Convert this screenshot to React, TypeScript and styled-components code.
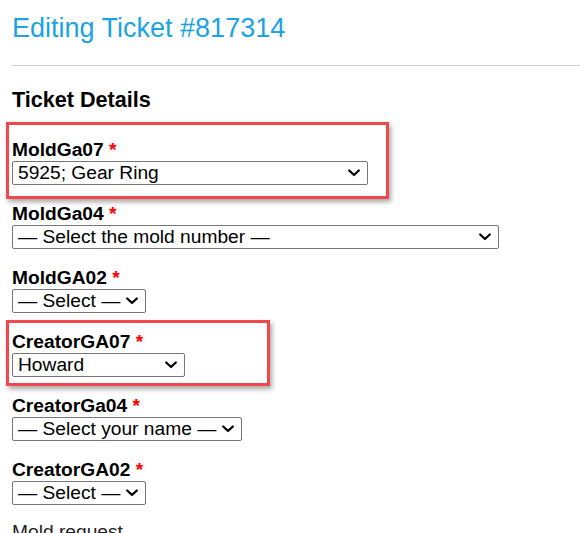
import React from "react";
import styled, { createGlobalStyle } from "styled-components";

const GlobalStyle = createGlobalStyle`
  html, body {
    margin: 0;
    padding: 0;
    background: #fff;
    overflow: hidden;
  }
  body {
    font-family: "Liberation Sans", Arial, sans-serif;
    color: #000;
  }
`

const chevron =
  "url(\"data:image/svg+xml;utf8,<svg xmlns='http://www.w3.org/2000/svg' width='12' height='8' viewBox='0 0 12 8'><path d='M1.2 1.5 L6 6 L10.8 1.5' fill='none' stroke='black' stroke-width='2.2' stroke-linecap='round' stroke-linejoin='round'/></svg>\")"

const Page = styled.div`
  padding: 12px 0 0 12px;
`
const Title = styled.h1`
  margin: 0;
  font-size: 27px;
  line-height: 32px;
  font-weight: normal;
  color: #1ba3e6;
`
const Rule = styled.hr`
  margin: 21px 0 0 0;
  border: 0;
  border-top: 1px solid #cccccc;
  height: 0;
`
const SectionTitle = styled.h2`
  margin: 21px 0 0 0;
  font-size: 21.6px;
  line-height: 25px;
  font-weight: bold;
`
const Form = styled.div`
  display: flex;
  flex-direction: column;
  gap: 17px;
  margin-top: 26px;
`
const Field = styled.div`
  position: relative;
  display: flex;
  flex-direction: column;
  align-items: flex-start;
`
const Label = styled.label`
  font-size: 19.2px;
  line-height: 23px;
  font-weight: bold;
`
const Required = styled.span`
  color: #ff0000;
`
const Select = styled.select<{ $width: number }>`
  appearance: none;
  -webkit-appearance: none;
  box-sizing: border-box;
  width: ${p => p.$width}px;
  height: 24px;
  margin: 0;
  padding: 0 24px 0 5px;
  font-family: "Liberation Sans", Arial, sans-serif;
  font-size: 19.2px;
  line-height: 22px;
  color: #000;
  border: 1px solid #767676;
  border-radius: 2px;
  background: #fff ${chevron} no-repeat right 7px center;
  background-size: 12px 8px;
`
const Marker = styled.div<{ $top: number; $width: number; $height: number }>`
  position: absolute;
  left: -6px;
  top: ${p => p.$top}px;
  width: ${p => p.$width}px;
  height: ${p => p.$height}px;
  box-sizing: border-box;
  border: 3px solid #f2474c;
  box-shadow: 2px 3px 5px rgba(0, 0, 0, 0.35);
  pointer-events: none;
`
const Note = styled.div`
  margin-top: 15px;
  font-size: 19.2px;
  line-height: 23px;
  color: #222;
`

type FieldDef = {
  name: string;
  value: string;
  width: number;
  mark?: { top: number; width: number; height: number };
}

const fields: FieldDef[] = [
  { name: "MoldGa07", value: "5925; Gear Ring", width: 356, mark: { top: -16, width: 383, height: 77 } },
  { name: "MoldGa04", value: "— Select the mold number —", width: 487 },
  { name: "MoldGA02", value: "— Select —", width: 134 },
  { name: "CreatorGA07", value: "Howard", width: 173, mark: { top: -10, width: 264, height: 66 } },
  { name: "CreatorGa04", value: "— Select your name —", width: 230 },
  { name: "CreatorGA02", value: "— Select —", width: 134 },
]

function App() {
  return (
    <Page>
      <GlobalStyle />
      <Title>Editing Ticket #817314</Title>
      <Rule />
      <SectionTitle>Ticket Details</SectionTitle>
      <Form>
        {fields.map(f => (
          <Field key={f.name}>
            <Label htmlFor={f.name}>
              {f.name} <Required>*</Required>
            </Label>
            <Select id={f.name} $width={f.width} defaultValue={f.value}>
              <option>{f.value}</option>
            </Select>
            {f.mark && <Marker $top={f.mark.top} $width={f.mark.width} $height={f.mark.height} />}
          </Field>
        ))}
      </Form>
      <Note>Mold request</Note>
    </Page>
  );
}

export default App
